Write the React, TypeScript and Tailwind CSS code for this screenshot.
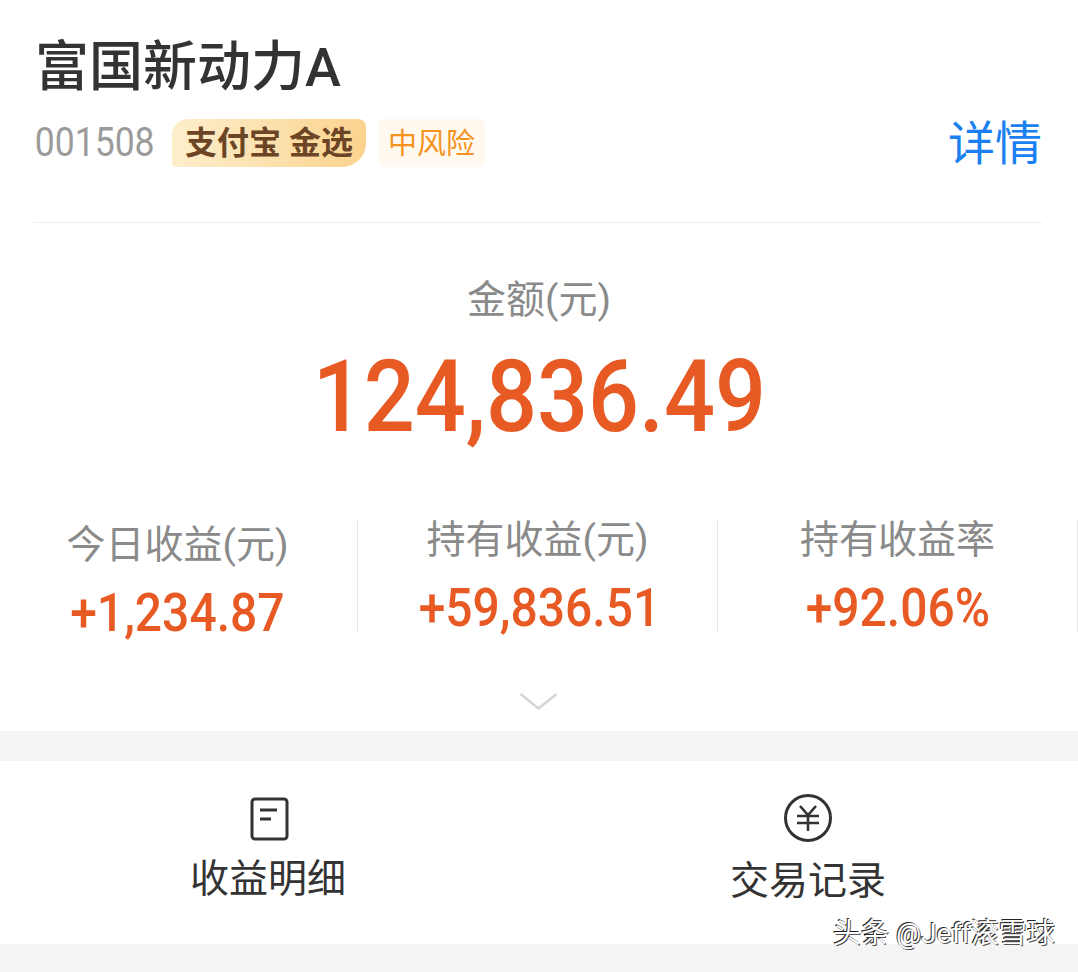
const CJK = "font-['Roboto','Noto_Sans_CJK_SC',sans-serif]";

function Stat({ label, value, offset, valueClass }: { label: string; value: string; offset: string; valueClass?: string }) {
  return (
    <div className="flex h-[112px] w-[360px] shrink-0 flex-col items-center border-r border-[#e8e8e8]">
      <div className={`flex flex-col items-center ${offset}`}>
        <span className="text-[39px] leading-[46px] text-[#8a8a8a]">{label}</span>
        <span className={`mt-[20px] scale-x-[0.905] text-[53px] leading-[50px] font-medium whitespace-nowrap text-[#e85a24] ${valueClass ?? ""}`}>
          {value}
        </span>
      </div>
    </div>
  );
}

function DetailIcon() {
  return (
    <svg className="ml-[3px]" width="40" height="44" viewBox="0 0 40 44" fill="none" stroke="#333" strokeWidth="3">
      <rect x="2" y="2" width="35" height="40" rx="3" />
      <path d="M10 13h17M10 22h11" />
    </svg>
  );
}

function YuanIcon() {
  return (
    <svg width="50" height="50" viewBox="0 0 50 50" fill="none" stroke="#333" strokeWidth="3">
      <circle cx="25" cy="25" r="22.5" />
      <path d="M17 13l8 9 8-9M14 23h22M14 30h22M25 22v16" strokeWidth="2.6" />
    </svg>
  );
}

export default function App() {
  return (
    <div className={`relative h-[972px] w-[1078px] overflow-hidden bg-white ${CJK}`}>
      <div className="pt-[38px] pr-[36px] pl-[33px]">
        <h1 className="pl-[2px] text-[54px] leading-[60px] font-medium text-[#333]">富国新动力A</h1>
        <div className="mt-[21px] flex h-[48px] items-center">
          <span className="w-[139px] origin-left scale-x-[0.867] pl-[2px] text-[41px] text-[#9b9b9b]">001508</span>
          <span className="flex h-[48px] w-[194px] items-center justify-center rounded-tl-[16px] rounded-tr-[8px] rounded-br-[24px] rounded-bl-[4px] bg-linear-to-r from-[#fdeecb] to-[#fbd38e] text-[32px] font-bold text-[#6b4525]">
            支付宝 金选
          </span>
          <span className="ml-[12px] flex h-[48px] w-[107px] items-center justify-center rounded-[6px] bg-[#fff9f0] pt-[3px] text-[29px] text-[#f5941f]">
            中风险
          </span>
          <span className="mt-[2px] ml-auto text-[47px] leading-[48px] text-[#1a7ff0]">详情</span>
        </div>
        <div className="mt-[55px] h-px bg-[#eeeeee]" />
      </div>

      <div className="flex flex-col items-center pt-[54px]">
        <span className="text-[39px] leading-[46px] text-[#8a8a8a]">金额(元)</span>
        <span className="mt-[24px] scale-x-[0.898] text-[100px] leading-[100px] font-medium text-[#e85a24]">124,836.49</span>
      </div>

      <div className="mt-[73px] ml-[-2px] flex">
        <Stat label="今日收益(元)" value="+1,234.87" offset="pt-[2px]" />
        <Stat label="持有收益(元)" value="+59,836.51" offset="mt-[-3px]" valueClass="ml-[4px] mt-[19px]" />
        <Stat label="持有收益率" value="+92.06%" offset="mt-[-3px]" valueClass="mt-[19px]" />
      </div>

      <div className="flex h-[99px] items-start justify-center pt-[60px]">
        <svg width="40" height="20" viewBox="0 0 40 20" fill="none" stroke="#d4d4d4" strokeWidth="2.4">
          <path d="M1.5 2L19.5 16.5L37.5 2" />
        </svg>
      </div>

      <div className="h-[30px] bg-[#f4f4f4]" />

      <div className="flex h-[183px]">
        <div className="flex w-[536px] shrink-0 flex-col items-center pt-[36px]">
          <DetailIcon />
          <span className="mt-[15px] text-[39px] leading-[46px] text-[#333]">收益明细</span>
        </div>
        <div className="flex w-[544px] shrink-0 flex-col items-center pt-[32px]">
          <YuanIcon />
          <span className="mt-[15px] text-[39px] leading-[46px] text-[#333]">交易记录</span>
        </div>
      </div>

      <div className="h-[28px] bg-[#f4f4f4]" />

      <span className="absolute top-[917px] left-[833px] text-[28px] leading-[34px] text-white [text-shadow:-1px_-1px_0_#222,1px_1px_0_#555]">
        头条 @Jeff滚雪球
      </span>
    </div>
  );
}
